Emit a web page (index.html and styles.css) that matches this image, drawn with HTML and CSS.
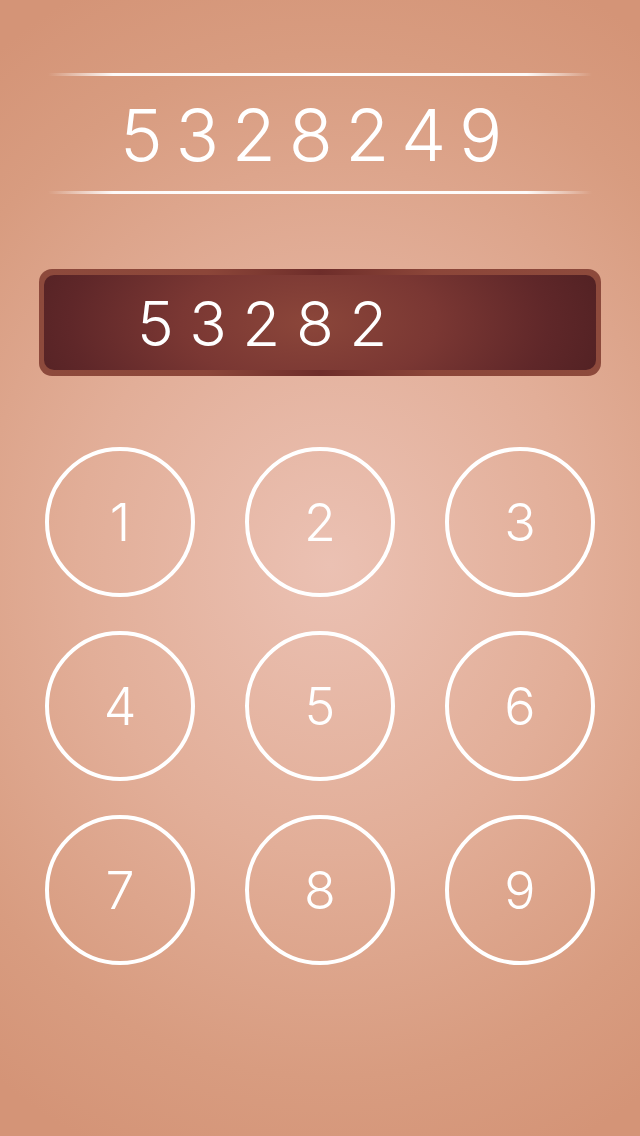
FILE: index.html
```
<!DOCTYPE html>
<html>
<head>
<meta charset="utf-8">
<link rel="stylesheet" href="styles.css">
</head>
<body>
<div class="screen">
  <div class="target">
    <div class="rule"></div>
    <div class="target-number">5328249</div>
    <div class="rule"></div>
  </div>
  <div class="display">
    <div class="display-inner">53282</div>
  </div>
  <div class="keypad">
    <div class="key">1</div>
    <div class="key">2</div>
    <div class="key">3</div>
    <div class="key">4</div>
    <div class="key">5</div>
    <div class="key">6</div>
    <div class="key">7</div>
    <div class="key">8</div>
    <div class="key">9</div>
  </div>
</div>
</body>
</html>
```
FILE: styles.css
```
html, body {
  margin: 0;
  padding: 0;
}
body {
  width: 640px;
  height: 1136px;
  overflow: hidden;
  font-family: "Inter", "Noto Sans", sans-serif;
}
.screen {
  width: 640px;
  height: 1136px;
  background: radial-gradient(ellipse 560px 640px at 330px 565px, #ebc1b3 0%, #e2ae98 45%, #d89c80 80%, #d49477 100%);
  display: flex;
  flex-direction: column;
  align-items: center;
  padding-top: 73px;
  box-sizing: border-box;
}
.target {
  width: 544px;
  display: flex;
  flex-direction: column;
}
.rule {
  height: 3px;
  background: linear-gradient(to right, rgba(255,255,255,0) 0%, rgba(255,255,255,0.95) 12%, #ffffff 50%, rgba(255,255,255,0.95) 88%, rgba(255,255,255,0) 100%);
}
.target-number {
  height: 115px;
  line-height: 117px;
  color: #ffffff;
  font-size: 72px;
  font-weight: 300;
  letter-spacing: 12.7px;
  padding-left: 72px;
}
.display {
  margin-top: 75px;
  width: 562px;
  height: 107px;
  box-sizing: border-box;
  padding: 6px 5px 6px 5px;
  border-radius: 13px;
  background: linear-gradient(to right, #8d4a3c 0%, #8c4639 30%, #6e2d2a 50%, #8c4639 70%, #8d4a3c 100%);
}
.display-inner {
  height: 100%;
  border-radius: 10px;
  background: radial-gradient(ellipse 320px 160px at 265px 50%, #8b463a 0%, #7a3733 40%, #5f2729 75%, #4f2022 100%);
  color: #ffffff;
  font-size: 62px;
  font-weight: 300;
  letter-spacing: 15.5px;
  line-height: 97px;
  padding-left: 93px;
}
.keypad {
  margin-top: 71px;
  display: grid;
  grid-template-columns: repeat(3, 150px);
  column-gap: 50px;
  row-gap: 34px;
}
.key {
  width: 150px;
  height: 150px;
  box-sizing: border-box;
  border: 4px solid #ffffff;
  border-radius: 50%;
  display: flex;
  align-items: center;
  justify-content: center;
  color: #ffffff;
  font-size: 52px;
  font-weight: 300;
}
```
